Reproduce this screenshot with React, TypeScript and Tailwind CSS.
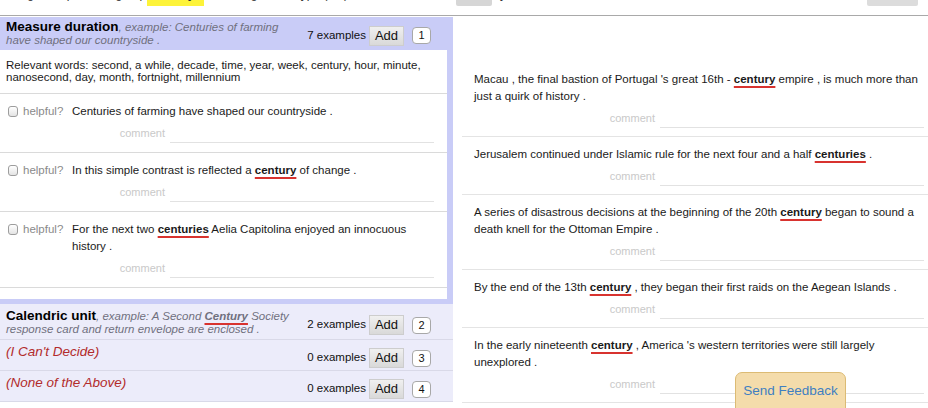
import React from "react";

const Kw = ({ children }: { children: React.ReactNode }) => (
    <b className="font-bold underline decoration-[#d8332f] decoration-2 underline-offset-[3px]">{children}</b>
);

const Comment = () => (
    <div className="mt-[3px] flex h-[20px] items-end justify-end">
        <span className="mr-[5px] text-[11px] leading-[20px] text-[#c9c9c9]">comment</span>
        <span className="h-[20px] w-[264px] border-b border-[#e2e2e2]"></span>
    </div>
);

const Checkbox = () => (
    <span className="inline-block h-[11px] w-[10px] rounded-[3px] border border-[#9d9d9d] bg-gradient-to-b from-white to-[#e4e4e4]"></span>
);

const AddCluster = ({ count, num }: { count: number; num: number }) => (
    <div className="flex items-center">
        <span className="text-[11.5px] text-[#111]">{count} examples</span>
        <span className="ml-[3px] flex h-[20px] w-[35px] items-center justify-center border border-[#cdcdcd] bg-gradient-to-b from-[#f0f0f0] to-[#d9d9d9] text-[13px] text-[#111]">
            Add
        </span>
        <span className="ml-[8px] flex h-[17px] w-[19px] items-center justify-center rounded-[4px] border border-[#a8a8a8] bg-white text-[11px] text-[#111]">
            {num}
        </span>
    </div>
);

const leftRows: React.ReactNode[] = [
    <>Centuries of farming have shaped our countryside .</>,
    <>In this simple contrast is reflected a <Kw>century</Kw> of change .</>,
    <>For the next two <Kw>centuries</Kw> Aelia Capitolina enjoyed an innocuous history .</>,
];

const rightRows: React.ReactNode[] = [
    <>Macau , the final bastion of Portugal 's great 16th - <Kw>century</Kw> empire , is much more than just a quirk of history .</>,
    <>Jerusalem continued under Islamic rule for the next four and a half <Kw>centuries</Kw> .</>,
    <>A series of disastrous decisions at the beginning of the 20th <Kw>century</Kw> began to sound a death knell for the Ottoman Empire .</>,
    <>By the end of the 13th <Kw>century</Kw> , they began their first raids on the Aegean Islands .</>,
    <>In the early nineteenth <Kw>century</Kw> , America 's western territories were still largely unexplored .</>,
];

export default function App() {
    return (
        <div className="relative h-[408px] w-[928px] overflow-hidden bg-white font-['Liberation_Sans',Arial,sans-serif] text-[#1a1a1a]">
            {/* Clipped toolbar at the top */}
            <div className="h-[16px] overflow-hidden border-b border-[#a9a9a9]">
                <div className="-mt-[14px] flex h-[20px] whitespace-nowrap text-[12px] leading-[16px] text-[#333]">
                    <span className="w-[147px] overflow-hidden pl-[8px]">Drag examples to a group</span>
                    <span className="w-[57px] bg-[#fdf33a] px-[4px] font-bold">century</span>
                    <span className="w-[252px] overflow-hidden pl-[8px]">it belongs to, or type (1,2)</span>
                    <span className="w-[36px] rounded-[2px] bg-[#d6d6d6]"></span>
                    <span className="flex-1 pl-[8px]">y</span>
                    <span className="mr-[10px] w-[51px] rounded-[2px] bg-[#dcdcdc]"></span>
                </div>
            </div>

            <div className="mt-[1px] flex">
                {/* Left: sense groups */}
                <div className="w-[453px] shrink-0">
                    <div className="bg-[#c9ccf7] pb-[5px]">
                        <div className="flex h-[33px] pl-[6px] pr-[22px]">
                            <div className="w-[290px] pt-[3px] text-[11.5px] leading-[13px]">
                                <span className="text-[13.5px] font-bold text-black">Measure duration</span>
                                <i className="text-[#70707e]">, example: Centuries of farming have shaped our countryside .</i>
                            </div>
                            <div className="flex flex-1 justify-end pt-[4px]">
                                <AddCluster count={7} num={1} />
                            </div>
                        </div>
                        <div className="mr-[6px] bg-white pb-[11px]">
                            <p className="border-b border-[#dadada] px-[6px] pb-[10px] pt-[9px] text-[11.5px] leading-[12px]">
                                Relevant words: second, a while, decade, time, year, week, century, hour, minute, nanosecond, day, month, fortnight, millennium
                            </p>
                            {leftRows.map((s, i) => (
                                <div key={i} className="flex border-b border-[#dadada] pb-[9px] pl-[8px] pr-[13px] pt-[9px]">
                                    <div className="flex h-[17px] w-[64px] shrink-0 items-center gap-[5px]">
                                        <Checkbox />
                                        <span className="text-[11.5px] text-[#8a8a8a]">helpful?</span>
                                    </div>
                                    <div className="flex-1">
                                        <p className="text-[11.5px] leading-[17px]">{s}</p>
                                        <Comment />
                                    </div>
                                </div>
                            ))}
                        </div>
                    </div>

                    <div className="flex h-[36px] border-b border-[#d9d9e8] bg-[#ececfa] pl-[6px] pr-[22px]">
                        <div className="w-[296px] shrink-0 pt-[5px] text-[11.5px] leading-[13px]">
                            <span className="text-[13.5px] font-bold text-black">Calendric unit</span>
                            <i className="text-[#70707e]">
                                , example: A Second <Kw>Century</Kw> Society response card and return envelope are enclosed .
                            </i>
                        </div>
                        <div className="flex flex-1 justify-end pt-[7px]">
                            <AddCluster count={2} num={2} />
                        </div>
                    </div>
                    <div className="flex h-[31px] border-b border-[#d9d9e8] bg-[#ececfa] pl-[6px] pr-[22px]">
                        <i className="w-[290px] pt-[5px] text-[13.5px] leading-[14px] text-[#b22b2b]">(I Can't Decide)</i>
                        <div className="flex flex-1 justify-end pt-[6px]">
                            <AddCluster count={0} num={3} />
                        </div>
                    </div>
                    <div className="flex h-[31px] border-b border-[#d9d9e8] bg-[#ececfa] pl-[6px] pr-[22px]">
                        <i className="w-[290px] pt-[5px] text-[13.5px] leading-[14px] text-[#b22b2b]">(None of the Above)</i>
                        <div className="flex flex-1 justify-end pt-[6px]">
                            <AddCluster count={0} num={4} />
                        </div>
                    </div>
                </div>

                {/* Right: unsorted examples */}
                <div className="ml-[9px] flex-1 pt-[45px]">
                    {rightRows.map((s, i) => (
                        <div key={i} className="border-b border-[#e4e4e4] pb-[8px] pl-[12px] pr-[4px] pt-[9px]">
                            <p className="text-[11.5px] leading-[17px]">{s}</p>
                            <Comment />
                        </div>
                    ))}
                </div>
            </div>

            <div className="absolute left-[735px] top-[372px] h-[44px] w-[111px] rounded-t-[7px] border border-[#dcbb74] bg-[#f4dcab] pt-[8px] text-center text-[13.5px] text-[#3f7fc1]">
                Send Feedback
            </div>
        </div>
    );
}
